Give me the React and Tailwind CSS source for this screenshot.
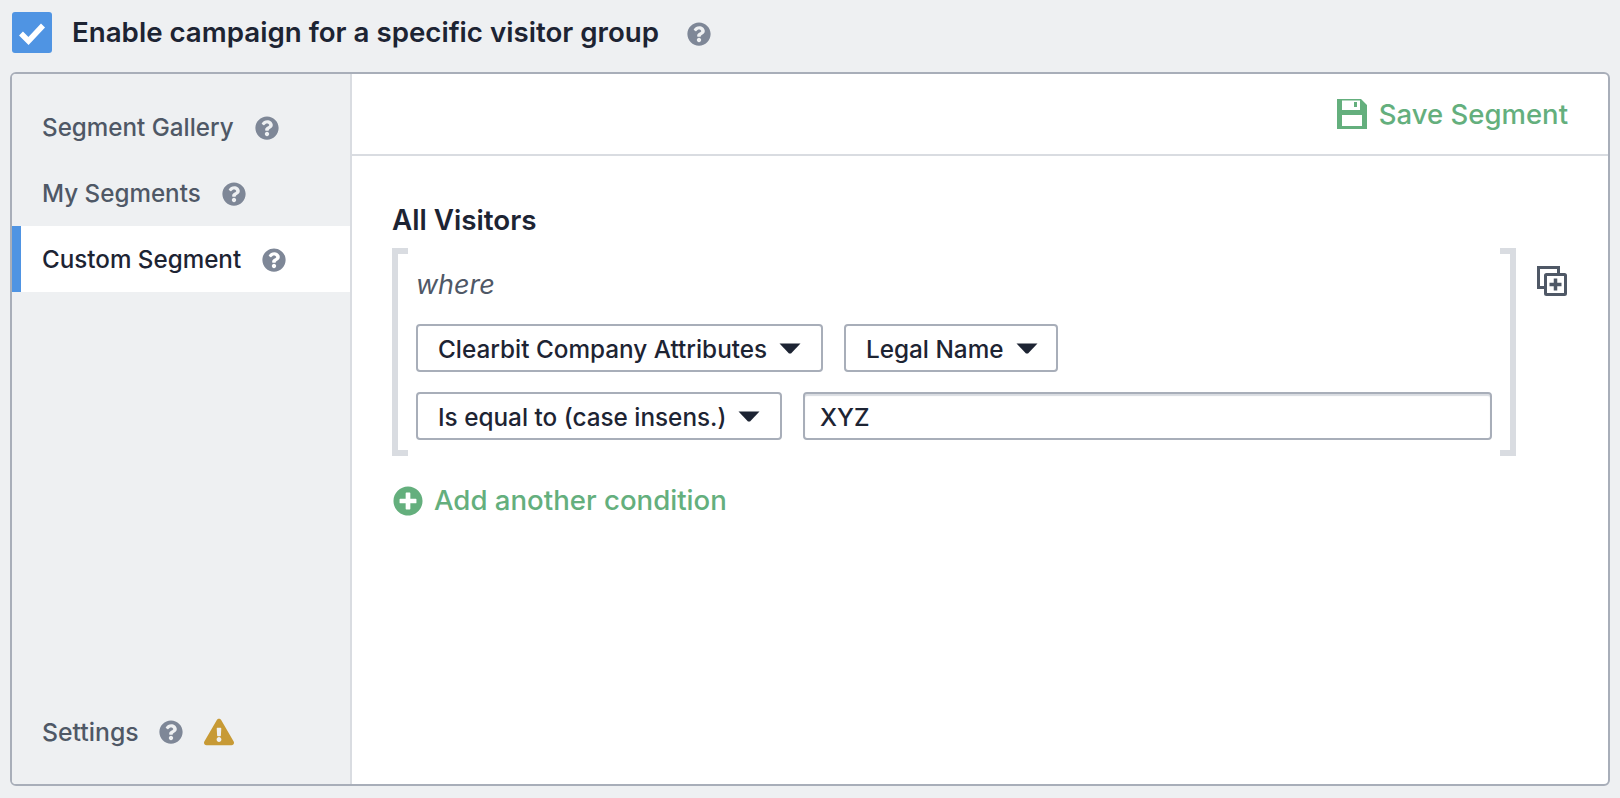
import React from "react";
import { FaQuestionCircle, FaPlusCircle, FaExclamationTriangle } from "react-icons/fa";

function Help({ className = "" }) {
  return <FaQuestionCircle className={`w-6 h-6 text-[#7e8797] shrink-0 ${className}`} />;
}

function Select({ label, className = "" }) {
  return (
    <div className={`h-[48px] flex items-center pl-[20px] pr-[20px] bg-white border-2 border-[#a8aeb9] rounded-[4px] text-[24.3px] leading-none text-[#1d2433] font-medium whitespace-nowrap ${className}`}>
      <span className="mt-[2px]">{label}</span>
      <svg className="ml-[12px] shrink-0" width="22" height="11" viewBox="0 0 22 11"><path d="M0.5 0.5H21.5L12 10.5H10Z" fill="#1d2433" /></svg>
    </div>
  );
}

function NavItem({ label, helpClass, active }) {
  return (
    <div className={`h-[66px] flex items-center relative ${active ? "bg-white text-[#1d2433]" : "text-[#4f5866]"}`}>
      {active && <div className="absolute left-0 top-0 bottom-0 w-[9px] bg-[#4f94e3]" />}
      <span className="pl-[30px] mt-[2px] text-[24.2px] font-medium leading-none">{label}</span>
      <Help className={helpClass} />
    </div>
  );
}

export default function App() {
  return (
    <div className="w-[1620px] h-[798px] bg-[#eef0f2] overflow-hidden pl-[10px] pr-[10px] font-['Inter',sans-serif]">
      <div className="h-[72px] flex items-center pb-[8px]">
        <div className="w-[40px] h-[41px] mt-[1px] ml-[2px] rounded-[3px] bg-[#4f94e3] flex items-center justify-center">
          <svg width="28" height="24" viewBox="0 0 28 24"><path d="M3 12.5L10.5 20L25 4.5" fill="none" stroke="#fff" strokeWidth="5.5" /></svg>
        </div>
        <span className="ml-[20px] mt-[2px] text-[27.7px] font-semibold leading-none text-[#1d2433]">Enable campaign for a specific visitor group</span>
        <Help className="ml-[28px] mt-[3px]" />
      </div>
      <div className="h-[714px] flex border-2 border-[#a8aeb9] rounded-[6px] overflow-hidden bg-white">
        <aside className="w-[340px] shrink-0 bg-[#eef0f2] border-r-2 border-[#d9dce1] flex flex-col pt-[20px]">
          <NavItem label="Segment Gallery" helpClass="ml-[21px] mt-[1px]" />
          <NavItem label="My Segments" helpClass="ml-[21px] mt-[1px]" />
          <NavItem label="Custom Segment" helpClass="ml-[21px] mt-[1px]" active />
          <div className="mt-auto mb-[38px] flex items-center text-[#4f5866]">
            <span className="pl-[30px] text-[24.8px] font-medium leading-none">Settings</span>
            <Help className="ml-[20px]" />
            <FaExclamationTriangle className="ml-[21px] w-[30px] h-[28px] text-[#c79a35]" />
          </div>
        </aside>
        <main className="flex-1 flex flex-col min-w-0">
          <div className="h-[82px] shrink-0 border-b-2 border-[#d9dce1] flex items-center justify-end pr-[40px]">
            <svg className="w-[30px] h-[30px] mr-[12px] mt-[-1px]" viewBox="0 0 30 30">
              <path fillRule="evenodd" fill="#64af7d" d="M0 0H24L30 6V30H0ZM5 1.5V11H23V1.5ZM17 3H20V8H17ZM5 16V27H25V16Z" />
            </svg>
            <span className="mt-[1px] text-[27.5px] font-medium leading-none text-[#64af7d]">Save Segment</span>
          </div>
          <div className="flex-1 pl-[40px] pt-[46px]">
            <div className="text-[27.8px] font-semibold leading-[36px] text-[#1d2433]">All Visitors</div>
            <div className="flex items-start mt-[10px]">
              <div className="relative w-[1124px] h-[208px] pl-[24px] pr-[24px]">
                <div className="absolute left-0 top-0 bottom-0 w-[16px] border-l-[6px] border-y-[6px] border-[#d9dce1]" />
                <div className="absolute right-0 top-0 bottom-0 w-[16px] border-r-[6px] border-y-[6px] border-[#d9dce1]" />
                <div className="pt-[21px] text-[27px] leading-[32px] italic text-[#4f5866]">where</div>
                <div className="flex gap-[21px] mt-[23px]">
                  <Select label="Clearbit Company Attributes" className="w-[407px]" />
                  <Select label="Legal Name" className="w-[214px]" />
                </div>
                <div className="flex gap-[21px] mt-[20px]">
                  <Select label="Is equal to (case insens.)" className="w-[366px]" />
                  <input readOnly value="XYZ" className="flex-1 min-w-0 h-[48px] border-2 border-[#a8aeb9] rounded-[4px] pl-[15px] pt-[2px] text-[24.3px] font-medium text-[#1d2433] shadow-[inset_0_2px_1px_#d9dce1] outline-none font-['Inter',sans-serif]" />
                </div>
              </div>
              <svg className="ml-[21px] mt-[18px] w-[30px] h-[30px]" viewBox="0 0 30 30" fill="none" stroke="#4f5866" strokeWidth="3">
                <path d="M7.5 21.5H1.5V1.5H21.5V7.5" />
                <rect x="8.5" y="8.5" width="20" height="20" rx="1" />
                <path d="M18.5 12.5V24.5M12.5 18.5H24.5" strokeWidth="3.5" />
              </svg>
            </div>
            <div className="flex items-center mt-[30px]">
              <FaPlusCircle className="w-[30px] h-[30px] ml-[1px] text-[#64af7d]" />
              <span className="ml-[11px] text-[27.6px] font-medium leading-none text-[#64af7d]">Add another condition</span>
            </div>
          </div>
        </main>
      </div>
    </div>
  );
}
